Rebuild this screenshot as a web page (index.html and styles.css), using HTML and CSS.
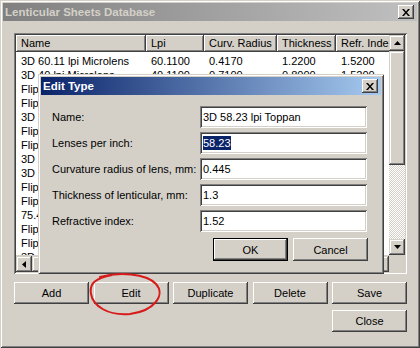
FILE: index.html
```html
<!doctype html>
<html lang="en">
  <head>
    <meta charset="UTF-8" />
    <title>Lenticular Sheets Database</title>
    <link rel="stylesheet" href="styles.css">
  </head>
  <body>
    <div class="window">
      <div class="titlebar inactive">
        <span class="title">Lenticular Sheets Database</span>
        <span class="cap-btn">
          <svg width="8" height="7" viewBox="0 0 8 7"><path d="M0 0h2l2 2.5L6 0h2L5 3.5 8 7H6L4 4.5 2 7H0l3-3.5z" fill="#000"/></svg>
        </span>
      </div>

      <div class="window-body">
        <div class="listview">
          <div class="list-main">
            <div class="list-header">
              <div class="hcell">Name</div>
              <div class="hcell">Lpi</div>
              <div class="hcell">Curv. Radius</div>
              <div class="hcell">Thickness</div>
              <div class="hcell">Refr. Index</div>
            </div>
            <div class="list-rows">
              <div class="row"><span>3D 60.11 lpi Microlens</span><span>60.1100</span><span>0.4170</span><span>1.2200</span><span>1.5200</span></div>
              <div class="row"><span>3D 40 lpi Microlens</span><span>40.1100</span><span>0.7100</span><span>0.8000</span><span>1.5200</span></div>
              <div class="row"><span>Flip 10 lpi</span><span>10.0000</span><span>1.5500</span><span>6.0000</span><span>1.5200</span></div>
              <div class="row"><span>Flip 15 lpi</span><span>15.0000</span><span>1.1000</span><span>4.4000</span><span>1.5200</span></div>
              <div class="row"><span>3D 20 lpi</span><span>20.0000</span><span>1.0500</span><span>3.0000</span><span>1.5200</span></div>
              <div class="row"><span>Flip 20 lpi</span><span>20.0000</span><span>0.8600</span><span>3.2000</span><span>1.5200</span></div>
              <div class="row"><span>Flip 30 lpi</span><span>30.0000</span><span>0.5700</span><span>2.0000</span><span>1.5200</span></div>
              <div class="row"><span>3D 50 lpi</span><span>50.0000</span><span>0.4900</span><span>1.3000</span><span>1.5200</span></div>
              <div class="row"><span>3D 58.23 lpi Toppan</span><span>58.2300</span><span>0.4450</span><span>1.3000</span><span>1.5200</span></div>
              <div class="row"><span>Flip/3D 62 lpi</span><span>62.0000</span><span>0.4000</span><span>1.0000</span><span>1.5200</span></div>
              <div class="row"><span>Flip/3D 75 lpi</span><span>75.0000</span><span>0.3300</span><span>0.6000</span><span>1.5200</span></div>
              <div class="row"><span>75.45 lpi Microlens</span><span>75.4500</span><span>0.3200</span><span>0.4500</span><span>1.5200</span></div>
              <div class="row"><span>Flip 100 lpi</span><span>100.0000</span><span>0.2600</span><span>0.4500</span><span>1.5200</span></div>
              <div class="row"><span>Flip/3D 100 lpi</span><span>100.0000</span><span>0.2500</span><span>0.4000</span><span>1.5200</span></div>
              <div class="row"><span>3D 100 lpi</span><span>100.0000</span><span>0.2400</span><span>0.4000</span><span>1.5200</span></div>
            </div>
          </div>

          <div class="vscroll">
            <div class="sbtn">
              <svg width="7" height="4" viewBox="0 0 7 4"><path d="M3.5 0L7 4H0z" fill="#000"/></svg>
            </div>
            <div class="thumb v"></div>
            <div class="track"></div>
            <div class="sbtn">
              <svg width="7" height="4" viewBox="0 0 7 4"><path d="M0 0h7L3.5 4z" fill="#000"/></svg>
            </div>
          </div>

          <div class="hscroll">
            <div class="sbtn">
              <svg width="4" height="7" viewBox="0 0 4 7"><path d="M4 0v7L0 3.5z" fill="#000"/></svg>
            </div>
            <div class="thumb h"></div>
            <div class="track"></div>
            <div class="sbtn">
              <svg width="4" height="7" viewBox="0 0 4 7"><path d="M0 0l4 3.5L0 7z" fill="#000"/></svg>
            </div>
          </div>

          <div class="corner"></div>
        </div>

        <div class="actions">
          <button class="btn">Add</button>
          <button class="btn">Edit</button>
          <button class="btn">Duplicate</button>
          <button class="btn">Delete</button>
          <button class="btn">Save</button>
        </div>
        <div class="actions end">
          <button class="btn">Close</button>
        </div>
      </div>

      <!-- the modal editor sits on top of the list -->
      <div class="dialog">
        <div class="titlebar active">
          <span class="title">Edit Type</span>
          <span class="cap-btn">
            <svg width="8" height="7" viewBox="0 0 8 7"><path d="M0 0h2l2 2.5L6 0h2L5 3.5 8 7H6L4 4.5 2 7H0l3-3.5z" fill="#000"/></svg>
          </span>
        </div>
        <div class="dialog-body">
          <div class="form">
            <label for="typeName">Name:</label>
            <div class="field" id="typeName">3D 58.23 lpi Toppan</div>
            <label for="typeLpi">Lenses per inch:</label>
            <div class="field" id="typeLpi"><span class="sel">58.23</span></div>
            <label for="typeRadius">Curvature radius of lens, mm:</label>
            <div class="field" id="typeRadius">0.445</div>
            <label for="typeThickness">Thickness of lenticular, mm:</label>
            <div class="field" id="typeThickness">1.3</div>
            <label for="typeIndex">Refractive index:</label>
            <div class="field" id="typeIndex">1.52</div>
          </div>
          <div class="dialog-buttons">
            <button class="btn default">OK</button>
            <button class="btn">Cancel</button>
          </div>
        </div>
      </div>

      <svg class="scribble" width="80" height="46" viewBox="86 272 80 46">
        <path d="M100 277 C118 272, 146 273, 156 284 C166 295, 154 311, 130 314 C108 316, 93 306, 91 294 C89 283, 96 278, 112 275" fill="none" stroke="#d91a1a" stroke-width="2" stroke-linecap="round"/>
      </svg>
    </div>
  </body>
</html>
```

FILE: styles.css
```css
body {
  margin: 0;
  font-family: "Liberation Sans", Arial, sans-serif;
  font-size: 11px;
  color: #000;
}
.window {
  position: relative;
  width: 420px;
  height: 348px;
  box-sizing: border-box;
  padding: 3px;
  background: #d4d0c8;
  box-shadow: inset 1px 1px #d4d0c8, inset -1px -1px #404040,
    inset 2px 2px #fff, inset -2px -2px #808080;
  display: flex;
  flex-direction: column;
}
.titlebar {
  height: 18px;
  display: flex;
  align-items: center;
  justify-content: space-between;
  padding: 0 3px 0 2px;
  font-weight: bold;
  font-size: 11.5px;
}
.titlebar.inactive {
  background: linear-gradient(to right, #808080, #c0c0c0);
  color: #d4d0c8;
}
.titlebar.active {
  background: linear-gradient(to right, #0a246a, #a6caf0);
  color: #fff;
}
.cap-btn {
  width: 16px;
  height: 14px;
  display: flex;
  align-items: center;
  justify-content: center;
  background: #d4d0c8;
  box-shadow: inset -1px -1px #404040, inset 1px 1px #fff,
    inset -2px -2px #808080;
}
.window-body {
  flex: 1;
  padding: 12px 10px 0 11px;
  display: flex;
  flex-direction: column;
}
.listview {
  height: 241px;
  box-sizing: border-box;
  padding: 2px;
  background: #fff;
  box-shadow: inset 1px 1px #808080, inset -1px -1px #fff,
    inset 2px 2px #404040, inset -2px -2px #d4d0c8;
  display: grid;
  grid-template-columns: 1fr 16px;
  grid-template-rows: 1fr 17px;
}
.list-main {
  overflow: hidden;
}
.list-header,
.row {
  display: grid;
  grid-template-columns: 130px 58px 73px 59px 80px;
}
.list-header {
  height: 17px;
}
.hcell {
  background: #d4d0c8;
  padding: 2px 0 0 5px;
  white-space: nowrap;
  overflow: hidden;
  box-shadow: inset -1px -1px #404040, inset 1px 1px #fff,
    inset -2px -2px #808080;
}
.list-rows {
  padding-top: 2px;
}
.row {
  height: 14px;
  line-height: 14px;
  white-space: nowrap;
}
.row span {
  padding-left: 5px;
  overflow: hidden;
}
.vscroll,
.hscroll {
  display: flex;
  background: #d4d0c8;
}
.vscroll {
  flex-direction: column;
}
.hscroll {
  padding-top: 1px;
}
.sbtn {
  flex: none;
  width: 16px;
  height: 16px;
  display: flex;
  align-items: center;
  justify-content: center;
  background: #d4d0c8;
  box-shadow: inset -1px -1px #404040, inset 1px 1px #d4d0c8,
    inset -2px -2px #808080, inset 2px 2px #fff;
}
.thumb {
  flex: none;
  background: #d4d0c8;
  box-shadow: inset -1px -1px #404040, inset 1px 1px #d4d0c8,
    inset -2px -2px #808080, inset 2px 2px #fff;
}
.thumb.v {
  height: 114px;
}
.thumb.h {
  width: 270px;
}
.track {
  flex: 1;
  background: repeating-conic-gradient(#d4d0c8 0 25%, #fff 0 50%) 0 0 / 2px 2px;
}
.corner {
  background: #d4d0c8;
}
.actions {
  display: flex;
  gap: 4px;
  justify-content: space-between;
  margin-top: 8px;
}
.actions.end {
  justify-content: flex-end;
  margin-top: 6px;
}
.btn {
  width: 75px;
  height: 22px;
  padding: 0;
  border: 0;
  background: #d4d0c8;
  font: inherit;
  color: #000;
  box-shadow: inset -1px -1px #404040, inset 1px 1px #fff,
    inset -2px -2px #808080, inset 2px 2px #d4d0c8;
}
.btn.default {
  outline: 1px solid #000;
  outline-offset: -1px;
  box-shadow: inset -2px -2px #404040, inset 2px 2px #fff,
    inset -3px -3px #808080;
}
.dialog {
  position: absolute;
  left: 38px;
  top: 74px;
  width: 346px;
  height: 200px;
  box-sizing: border-box;
  padding: 3px;
  background: #d4d0c8;
  box-shadow: inset 1px 1px #d4d0c8, inset -1px -1px #404040,
    inset 2px 2px #fff, inset -2px -2px #808080;
  display: flex;
  flex-direction: column;
}
.dialog-body {
  padding: 11px 13px 0 11px;
}
.form {
  display: grid;
  grid-template-columns: 148px 167px;
  grid-auto-rows: 22px;
  row-gap: 4px;
  align-items: center;
}
.form label {
  white-space: nowrap;
}
.field {
  height: 22px;
  box-sizing: border-box;
  padding: 0 3px;
  line-height: 22px;
  background: #fff;
  box-shadow: inset 1px 1px #808080, inset -1px -1px #fff,
    inset 2px 2px #404040, inset -2px -2px #d4d0c8;
  white-space: nowrap;
}
.sel {
  background: #0a246a;
  color: #fff;
  padding: 1px 0;
}
.dialog-buttons {
  display: flex;
  justify-content: flex-end;
  gap: 5px;
  margin-top: 6px;
}
.dialog-buttons .btn {
  height: 23px;
}
.scribble {
  position: absolute;
  left: 86px;
  top: 272px;
}
```
